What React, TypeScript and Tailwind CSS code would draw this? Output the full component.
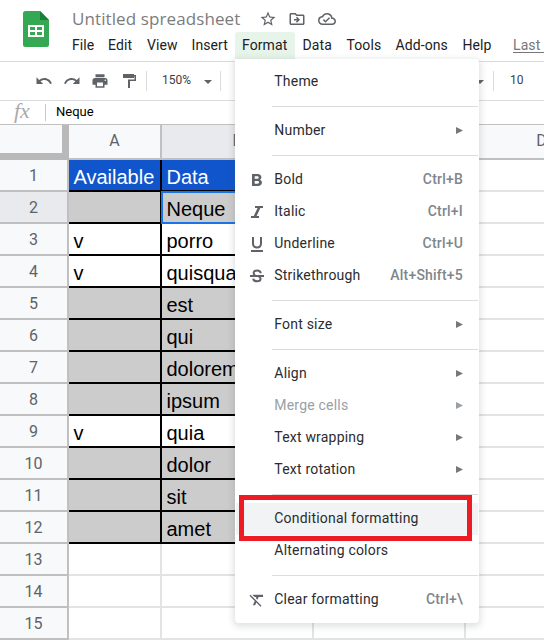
import React from "react";
import { MdUndo, MdRedo, MdPrint, MdStarBorder, MdFormatClear, MdOutlineDriveFileMove, MdOutlineCloudDone } from "react-icons/md";

const rows: { n: number; a: string; b: string; kind: "head" | "gray" | "white" | "empty" }[] = [
  { n: 1, a: "Available", b: "Data", kind: "head" },
  { n: 2, a: "", b: "Neque", kind: "gray" },
  { n: 3, a: "v", b: "porro", kind: "white" },
  { n: 4, a: "v", b: "quisquam", kind: "white" },
  { n: 5, a: "", b: "est", kind: "gray" },
  { n: 6, a: "", b: "qui", kind: "gray" },
  { n: 7, a: "", b: "dolorem", kind: "gray" },
  { n: 8, a: "", b: "ipsum", kind: "gray" },
  { n: 9, a: "v", b: "quia", kind: "white" },
  { n: 10, a: "", b: "dolor", kind: "gray" },
  { n: 11, a: "", b: "sit", kind: "gray" },
  { n: 12, a: "", b: "amet", kind: "gray" },
  { n: 13, a: "", b: "", kind: "empty" },
  { n: 14, a: "", b: "", kind: "empty" },
  { n: 15, a: "", b: "", kind: "empty" },
];

const cellStyle = {
  head: "bg-[#1155cc] text-white border-black",
  gray: "bg-[#cccccc] text-black border-black",
  white: "bg-white text-black border-black",
  empty: "bg-white text-black border-[#e2e3e3]",
};

function Logo() {
  return (
    <svg className="ml-[23px] mt-[11px] h-9 w-[26px] shrink-0" viewBox="0 0 26 36">
      <path d="M2.500 0H17l9 9v24.500a2.500 2.500 0 0 1-2.500 2.500h-21A2.500 2.500 0 0 1 0 33.500v-31A2.500 2.500 0 0 1 2.500 0z" fill="#34a853" />
      <path d="M17 0l9 9h-9z" fill="#188038" />
      <path d="M5 14h16v12H5zM7 16v3h5v-3zM14 16v3h5v-3zM7 21v3h5v-3zM14 21v3h5v-3z" fill="#fff" fillRule="evenodd" />
    </svg>
  );
}

const PaintFormat = () => (
  <svg className="ml-[12px] h-[18px] w-[18px] shrink-0" viewBox="0 0 18 18">
    <path fill="#5f6368" d="M2 2h11v1h2v6H9v7H7V7.500h6.500V4.500H13V6H2z" />
  </svg>
);

const Bold = () => (
  <svg className="h-[18px] w-[18px]" viewBox="0 0 18 18">
    <path fillRule="evenodd" fill="#5f6368" d="M4 3h5.700c2.200 0 3.700 1.300 3.700 3.200 0 1.200-.6 2-1.500 2.500 1.300.5 2 1.500 2 2.900 0 2.100-1.600 3.400-4 3.400H4zM6.700 5.200v2.500h2.500c.9 0 1.500-.5 1.500-1.250S10.100 5.200 9.200 5.200zM6.700 9.900v2.900h2.700c1.100 0 1.700-.6 1.700-1.450s-.6-1.450-1.700-1.450z" />
  </svg>
);
const Italic = () => (
  <svg className="h-[18px] w-[18px]" viewBox="0 0 18 18">
    <path fill="#5f6368" d="M7 3h8v2h-2.600L8.600 13H11v2H3v-2h2.800L9.600 5H7z" />
  </svg>
);
const Underline = () => (
  <svg className="h-[18px] w-[18px]" viewBox="0 0 18 18">
    <path fill="#5f6368" d="M4 2h2v6.500C6 10.400 7.100 11.500 9 11.500s3-1.100 3-3V2h2v6.500c0 3.100-1.900 5-5 5s-5-1.900-5-5zM3 15h12v2H3z" />
  </svg>
);
const Strike = () => (
  <svg className="h-[18px] w-[18px]" viewBox="0 0 18 18">
    <path fill="#5f6368" d="M2 8h14v2H2z" />
    <path fill="none" stroke="#5f6368" strokeWidth="2" d="M12.700 6.200C12.600 4.700 11.200 3.500 9.100 3.500 7 3.500 5.600 4.500 5.600 6c0 1 .5 1.700 1.500 2.300M10.800 9.700c1.200.5 1.800 1.200 1.800 2.100 0 1.600-1.400 2.500-3.500 2.500-2.300 0-3.700-1.100-3.800-2.700" />
  </svg>
);

function Item({ label, icon, keys, sub, off, hot }: { label: string; icon?: React.ReactNode; keys?: string; sub?: boolean; off?: boolean; hot?: boolean }) {
  return (
    <div className={`mx-px flex h-8 items-center pb-[2px] pl-[12px] pr-[15px] text-[14px] tracking-[0.2px] ${hot ? "bg-[#f1f3f4]" : ""} ${off ? "text-[#9aa0a6]" : "text-[#2b2c2f]"}`}>
      <span className="mt-px flex w-[26.300px] shrink-0">{icon}</span>
      <span className="grow whitespace-nowrap">{label}</span>
      {keys && <span className="font-medium text-[#80868b]">{keys}</span>}
      {sub && (
        <svg className="mt-px h-[7px] w-[7px]" viewBox="0 0 7 7">
          <path d="M0 0l7 3.500L0 7z" fill={off ? "#9aa0a6" : "#777777"} />
        </svg>
      )}
    </div>
  );
}
const Sep = () => <div className="my-2 ml-[37px] mr-px h-px bg-[#dadce0]" />;

const Caret = ({ className }: { className: string }) => (
  <svg className={`h-1 w-2 shrink-0 ${className}`} viewBox="0 0 8 4"><path d="M0 0h8L4 4z" fill="#5f6368" /></svg>
);

export default function App() {
  return (
    <div className="relative h-[641px] w-[544px] overflow-hidden bg-white font-['Roboto',sans-serif]">
      <header className="flex h-[62px] border-b border-[#dadce0]">
        <Logo />
        <div className="ml-4 flex flex-col">
          <div className="flex h-8 items-center pl-[7px] pt-[6px] text-[#5f6368]">
            <span className="w-[187px] whitespace-nowrap pb-px font-['Open_Sans',sans-serif] text-[17px] tracking-[0.1px] text-[#7c7c7c]">Untitled spreadsheet</span>
            <MdStarBorder size={18} />
            <MdOutlineDriveFileMove className="ml-[11px]" size={18} />
            <MdOutlineCloudDone className="ml-[12px]" size={18} />
          </div>
          <nav className="flex h-[27px] items-center whitespace-nowrap text-[14px] tracking-[0.1px] text-[#202124]">
            <span className="w-[36px] pl-[7px]">File</span>
            <span className="w-[39px] pl-[7px]">Edit</span>
            <span className="w-[45px] pl-[7px]">View</span>
            <span className="w-[50px] pl-[6.500px]">Insert</span>
            <span className="flex h-full w-[60px] items-center rounded-t-[3px] bg-[#e6f4ea] pl-[7px]">Format</span>
            <span className="w-[44px] pl-[7.500px]">Data</span>
            <span className="w-[49px] pl-[7.500px]">Tools</span>
            <span className="w-[67px] pl-[7.500px]">Add-ons</span>
            <span className="w-[50px] pl-[7.500px]">Help</span>
            <span className="pl-[8px] text-[#777777] underline underline-offset-2">Last edit</span>
          </nav>
        </div>
      </header>

      <div className="flex h-[39px] items-center border-b border-[#dadce0] text-[12px] text-[#3c4043]">
        <MdUndo className="ml-[35px] shrink-0 text-[#5f6368]" size={18} />
        <MdRedo className="ml-[10px] shrink-0 text-[#5f6368]" size={18} />
        <MdPrint className="ml-[10px] shrink-0 text-[#5f6368]" size={18} />
        <PaintFormat />
        <div className="ml-[7px] h-5 w-px shrink-0 bg-[#dadce0]" />
        <span className="-mt-[2px] ml-[15px] w-[42px] shrink-0">150%</span>
        <Caret className="mt-[2px]" />
        <div className="ml-2 h-5 w-px shrink-0 bg-[#dadce0]" />
        <Caret className="ml-[255px] mt-[2px]" />
        <div className="ml-[9px] h-5 w-px shrink-0 bg-[#dadce0]" />
        <span className="-mt-[2px] ml-[16px]">10</span>
      </div>

      <div className="flex h-6 items-center border-b border-[#c0c0c0]">
        <span className="w-[45px] pb-[4px] pl-[14px] font-['Liberation_Serif',serif] text-[22px] italic leading-none text-[#aaaaaa]">fx</span>
        <div className="h-[17px] w-px bg-[#c8c8c8]" />
        <span className="ml-[10px] pb-px text-[13px] text-black">Neque</span>
      </div>

      <div className="flex h-[35px] w-[618px] text-[16px] text-[#5f6368]">
        <div className="w-[69px] border-b-[7px] border-r-[7px] border-[#b9b9b9] bg-[#f8f9fa]" />
        <div className="flex w-[93px] items-center justify-center border-b-2 border-r-2 border-[#c0c0c0] bg-[#f8f9fa] pb-[2px]">A</div>
        <div className="flex w-[152px] items-center justify-center border-b-2 border-r-2 border-[#c0c0c0] bg-[#e8eaed] pb-[2px] pl-px">B</div>
        <div className="flex w-[152px] items-center justify-center border-b-2 border-r-2 border-[#c0c0c0] bg-[#f8f9fa] pb-[2px] pl-px">C</div>
        <div className="flex w-[152px] items-center justify-center border-b-2 border-r-2 border-[#c0c0c0] bg-[#f8f9fa] pb-[2px] pl-px">D</div>
      </div>

      {rows.map((r) => (
        <div key={r.n} className="flex h-8 w-[618px]">
          <div className={`flex w-[69px] items-center justify-center border-b-2 border-r-2 border-[#c0c0c0] pt-[2px] text-[16px] text-[#5f6368] ${r.n === 2 ? "bg-[#e8eaed]" : "bg-[#f8f9fa]"}`}>{r.n}</div>
          <div className={`flex w-[93px] items-center overflow-hidden whitespace-nowrap border-b-2 border-r-2 pl-[4.500px] pt-[4px] font-['Liberation_Sans',sans-serif] text-[20px] leading-none ${cellStyle[r.kind]}`}>{r.a}</div>
          <div className={`flex w-[152px] items-center overflow-hidden whitespace-nowrap border-b-2 border-r-2 pl-[4.500px] pt-[4px] font-['Liberation_Sans',sans-serif] text-[20px] leading-none ${cellStyle[r.kind]}`}>{r.b}</div>
          <div className="w-[152px] border-b-2 border-r-2 border-[#e2e3e3]" />
          <div className="w-[152px] border-b-2 border-[#e2e3e3]" />
        </div>
      ))}

      {/* active cell outline */}
      <div className="absolute left-[161px] top-[191px] h-[33px] w-[153px] border-2 border-[#1a73e8]" />

      {/* Format menu */}
      <div className="absolute left-[235px] top-[59px] h-[564px] w-[244px] rounded-b-[4px] rounded-tr-[4px] bg-white pt-[7px] shadow-[0_2px_6px_2px_rgba(60,64,67,0.15)]">
        <Item label="Theme" />
        <Sep />
        <Item label="Number" sub />
        <Sep />
        <Item label="Bold" icon={<Bold />} keys="Ctrl+B" />
        <Item label="Italic" icon={<Italic />} keys="Ctrl+I" />
        <Item label="Underline" icon={<Underline />} keys="Ctrl+U" />
        <Item label="Strikethrough" icon={<Strike />} keys="Alt+Shift+5" />
        <Sep />
        <Item label="Font size" sub />
        <Sep />
        <Item label="Align" sub />
        <Item label="Merge cells" sub off />
        <Item label="Text wrapping" sub />
        <Item label="Text rotation" sub />
        <Sep />
        <Item label="Conditional formatting" hot />
        <Item label="Alternating colors" />
        <Sep />
        <Item label="Clear formatting" icon={<MdFormatClear size={18} color="#5f6368" />} keys={"Ctrl+\\"} />
      </div>

      {/* callout frame */}
      <div className="absolute left-[239px] top-[495px] h-[46px] w-[233px] border-[5px] border-[#ed1c24]" />
    </div>
  );
}
